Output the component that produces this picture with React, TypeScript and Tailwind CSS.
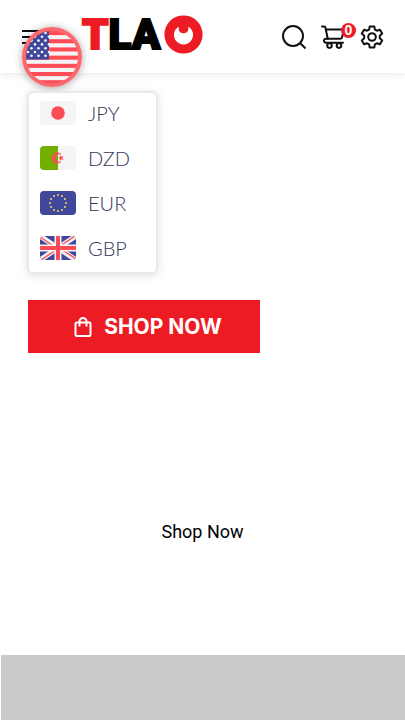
const CURRENCIES = [
  { code: "JPY", Flag: JapanFlag },
  { code: "DZD", Flag: AlgeriaFlag },
  { code: "EUR", Flag: EuropeFlag },
  { code: "GBP", Flag: BritainFlag },
]

function JapanFlag() {
  return (
    <svg viewBox="0 0 36 24" className="h-6 w-9 rounded-sm" aria-hidden="true">
      <rect width="36" height="24" fill="#f5f5f5" />
      <circle cx="18" cy="12" r="6.8" fill="#ff4b55" />
    </svg>
  )
}

function AlgeriaFlag() {
  return (
    <svg viewBox="0 0 36 24" className="h-6 w-9 rounded-sm" aria-hidden="true">
      <rect width="36" height="24" fill="#f5f5f5" />
      <rect width="18" height="24" fill="#73af00" />
      <path d="M20.8 8.2a5.2 5.2 0 1 0 0 7.6a4.1 4.1 0 1 1 0-7.6z" fill="#ff4b55" stroke="#ff4b55" strokeWidth="0.7" />
      <path d="M17.6 12l2.3-.8v-2.5l1.5 2 2.3-.8-1.4 2.1 1.4 2.1-2.3-.8-1.5 2v-2.5z" fill="#ff4b55" />
    </svg>
  )
}

function EuropeFlag() {
  return (
    <svg viewBox="0 0 36 24" className="h-6 w-9 rounded-sm" aria-hidden="true">
      <rect width="36" height="24" fill="#41479b" />
      {Array.from({ length: 12 }, (_, i) => (
        <circle
          key={i}
          cx={18 + 8 * Math.sin((i * Math.PI) / 6)}
          cy={12 - 8 * Math.cos((i * Math.PI) / 6)}
          r="0.95"
          fill="#ffe15a"
        />
      ))}
    </svg>
  )
}

function BritainFlag() {
  return (
    <svg viewBox="0 0 36 24" className="h-6 w-9 rounded-sm" aria-hidden="true">
      <rect width="36" height="24" fill="#41479b" />
      <path d="M0 0L36 24M36 0L0 24" stroke="#f5f5f5" strokeWidth="5" />
      <path d="M0 1L15 11M36 23L21 13M35 0L20 10M1 24L16 14" stroke="#ff4b55" strokeWidth="1.4" />
      <path d="M18 0V24M0 12H36" stroke="#f5f5f5" strokeWidth="7" />
      <path d="M18 0V24M0 12H36" stroke="#ff4b55" strokeWidth="4" />
    </svg>
  )
}

function UsaFlag() {
  return (
    <svg viewBox="0 0 60 60" className="size-full" aria-hidden="true">
      <defs>
        <clipPath id="usa-round">
          <circle cx="30" cy="30" r="28" />
        </clipPath>
      </defs>
      <g clipPath="url(#usa-round)">
        <rect width="60" height="60" fill="#f5f5f5" />
        {Array.from({ length: 7 }, (_, i) => (
          <rect key={i} y={4 + i * 8.2} width="60" height="4.1" fill="#ff4b55" />
        ))}
        <rect width="27" height="32.5" fill="#41479b" />
        {Array.from({ length: 7 }, (_, row) =>
          [0, 1, 2, 3].map((col) => (
            <circle key={`${row}-${col}`} cx={2.5 + col * 7 + (row % 2) * 3.5} cy={6 + row * 3.8} r="1.3" fill="#f5f5f5" />
          ))
        )}
      </g>
      <circle cx="30" cy="30" r="28" fill="none" stroke="#fc686c" strokeWidth="4" />
    </svg>
  )
}

function Logo() {
  return (
    <a href="#" className="flex items-center gap-1 pb-1" aria-label="TLA home">
      <span className="font-['Roboto',sans-serif] text-[42px] leading-none font-black text-black [-webkit-text-stroke:2px_currentColor]">
        <span className="text-[#ed1c24]">T</span>LA
      </span>
      <svg viewBox="0 0 40 40" className="size-[39px]" aria-hidden="true">
        <circle cx="20" cy="20" r="19.6" fill="#ed1c24" />
        <path d="M15 12A9.8 9.8 0 1 0 25 12Q25.5 18.5 20 18.8Q14.5 18.5 15 12z" fill="#fff" />
        <circle cx="20" cy="14" r="4.6" fill="#ed1c24" />
      </svg>
    </a>
  )
}

function SearchIcon() {
  return (
    <svg viewBox="0 0 24 24" className="size-6" fill="none" stroke="#111" strokeWidth="2" aria-hidden="true">
      <circle cx="11" cy="11" r="10" />
      <path d="M18 18l5.5 5.5" />
    </svg>
  )
}

function CartIcon() {
  return (
    <svg viewBox="0 0 24 24" className="size-6" fill="none" stroke="#111" strokeWidth="2" strokeLinecap="round" strokeLinejoin="round" aria-hidden="true">
      <path d="M1 1.5h2.2q1 0 1.2 1L6.8 14" />
      <path d="M5 4.5h18l-2 8q-.3 1.3-2 1.3H5q-2 .2-2 2T5 17.7h17" />
      <circle cx="8.5" cy="20.6" r="2.3" />
      <circle cx="18" cy="20.6" r="2.3" />
    </svg>
  )
}

function GearIcon() {
  return (
    <svg viewBox="0 0 24 24" className="size-6" fill="none" stroke="#111" strokeWidth="2" strokeLinejoin="round" aria-hidden="true">
      <path d="M9.7 1.5h4.6l.6 3.1 2 1.1 3-1 2.3 3.9-2.4 2.1v2.6l2.4 2.1-2.3 3.9-3-1-2 1.1-.6 3.1H9.7l-.6-3.1-2-1.1-3 1-2.3-3.9 2.4-2.1v-2.6L1.8 8.6l2.3-3.9 3 1 2-1.1z" />
      <circle cx="12" cy="12" r="3.8" />
    </svg>
  )
}

function BagIcon() {
  return (
    <svg viewBox="0 0 18 20" className="h-5 w-[18px]" fill="none" stroke="#fff" strokeWidth="2" aria-hidden="true">
      <rect x="1.5" y="5.5" width="15" height="13.5" rx="1.2" />
      <path d="M5.5 9.5V4.5a3.5 3.5 0 0 1 7 0v5" />
    </svg>
  )
}

function CurrencyPicker() {
  return (
    <div className="absolute top-[27px] left-[22px] z-10">
      <button type="button" aria-label="Currency: USD" className="block size-[60px] rounded-full shadow-[0_1px_8px_rgba(0,0,0,0.35)]">
        <UsaFlag />
      </button>
      <ul className="mt-1 ml-[5px] flex w-[131px] flex-col gap-[5px] rounded-md border-2 border-[#e9e9e9] bg-white px-[11px] pb-1 shadow-[0_2px_10px_rgba(0,0,0,0.12)]">
        {CURRENCIES.map(({ code, Flag }) => (
          <li key={code}>
            <button type="button" className="flex h-10 items-center gap-3 font-['Lato',sans-serif] text-xl font-light text-[#34365a]">
              <Flag />
              {code}
            </button>
          </li>
        ))}
      </ul>
    </div>
  )
}

export default function App() {
  return (
    <div className="relative min-h-screen bg-white font-['Roboto',sans-serif] text-black">
      <header className="flex h-[73px] items-center pr-[21px] pl-[22px] shadow-[0_1px_8px_rgba(0,0,0,0.1)]">
        <button type="button" aria-label="Menu" className="mr-10 flex w-5 flex-col gap-1">
          <span className="h-0.5 w-full bg-[#111]" />
          <span className="h-0.5 w-full bg-[#111]" />
          <span className="h-0.5 w-full bg-[#111]" />
        </button>
        <Logo />
        <div className="ml-auto flex items-center gap-[15px]">
          <button type="button" aria-label="Search">
            <SearchIcon />
          </button>
          <button type="button" aria-label="Cart" className="relative">
            <CartIcon />
            <span className="absolute -top-0.5 left-5 flex size-[15px] items-center justify-center rounded-full bg-[#ed1c24] font-['Liberation_Sans',sans-serif] text-sm leading-none font-bold text-white">
              0
            </span>
          </button>
          <button type="button" aria-label="Settings">
            <GearIcon />
          </button>
        </div>
      </header>
      <CurrencyPicker />

      <main>
        <section className="px-7 pt-[227px]">
          <a href="#" className="flex h-[53px] w-[232px] items-center justify-center gap-3 bg-[#ed1c24] pl-2 font-['Inter',sans-serif] text-[21px] font-bold text-white">
            <BagIcon />
            SHOP NOW
          </a>
        </section>
        <section className="pt-[165px] pb-[109px] text-center">
          <a href="#" className="text-lg">
            Shop Now
          </a>
        </section>
        <div className="ml-px h-[65px] bg-[#cbcbcb]" />
      </main>
    </div>
  )
}
